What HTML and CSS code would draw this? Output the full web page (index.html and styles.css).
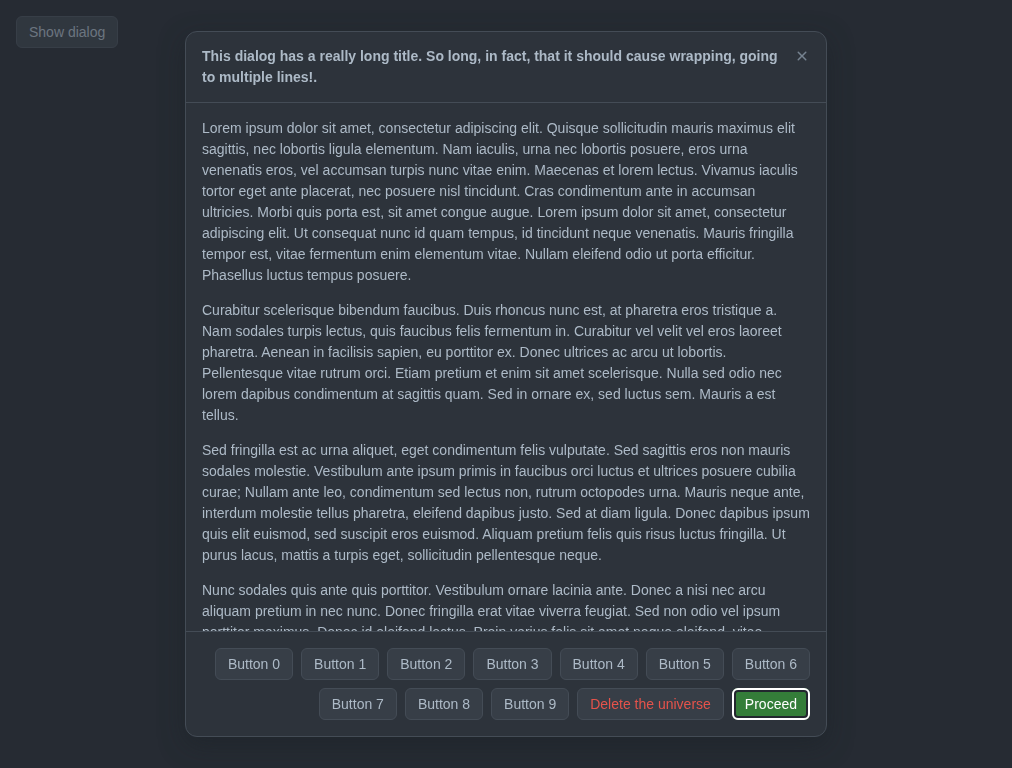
FILE: index.html
```html
<!DOCTYPE html>
<html lang="en">
<head>
<meta charset="utf-8">
<title>Dialog</title>
<link rel="stylesheet" href="styles.css">
</head>
<body>
<div class="page">
  <button class="btn btn-show">Show dialog</button>
</div>
<div class="backdrop">
  <div class="dialog" role="dialog">
    <div class="dialog-header">
      <h1 class="dialog-title">This dialog has a really long title. So long, in fact, that it should cause wrapping, going to multiple lines!.</h1>
      <button class="close" aria-label="Close">
        <svg width="16" height="16" viewBox="0 0 16 16"><path d="M3.72 3.72a.75.75 0 0 1 1.06 0L8 6.94l3.22-3.22a.749.749 0 0 1 1.275.326.749.749 0 0 1-.215.734L9.06 8l3.22 3.22a.749.749 0 0 1-.326 1.275.749.749 0 0 1-.734-.215L8 9.06l-3.220 3.22a.751.751 0 0 1-1.042-.018.751.751 0 0 1-.018-1.042L6.94 8 3.72 4.78a.75.75 0 0 1 0-1.06Z" fill="currentColor"/></svg>
      </button>
    </div>
    <div class="dialog-body">
      <p>Lorem ipsum dolor sit amet, consectetur adipiscing elit. Quisque sollicitudin mauris maximus elit sagittis, nec lobortis ligula elementum. Nam iaculis, urna nec lobortis posuere, eros urna venenatis eros, vel accumsan turpis nunc vitae enim. Maecenas et lorem lectus. Vivamus iaculis tortor eget ante placerat, nec posuere nisl tincidunt. Cras condimentum ante in accumsan ultricies. Morbi quis porta est, sit amet congue augue. Lorem ipsum dolor sit amet, consectetur adipiscing elit. Ut consequat nunc id quam tempus, id tincidunt neque venenatis. Mauris fringilla tempor est, vitae fermentum enim elementum vitae. Nullam eleifend odio ut porta efficitur. Phasellus luctus tempus posuere.</p>
      <p>Curabitur scelerisque bibendum faucibus. Duis rhoncus nunc est, at pharetra eros tristique a. Nam sodales turpis lectus, quis faucibus felis fermentum in. Curabitur vel velit vel eros laoreet pharetra. Aenean in facilisis sapien, eu porttitor ex. Donec ultrices ac arcu ut lobortis. Pellentesque vitae rutrum orci. Etiam pretium et enim sit amet scelerisque. Nulla sed odio nec lorem dapibus condimentum at sagittis quam. Sed in ornare ex, sed luctus sem. Mauris a est tellus.</p>
      <p>Sed fringilla est ac urna aliquet, eget condimentum felis vulputate. Sed sagittis eros non mauris sodales molestie. Vestibulum ante ipsum primis in faucibus orci luctus et ultrices posuere cubilia curae; Nullam ante leo, condimentum sed lectus non, rutrum octopodes urna. Mauris neque ante, interdum molestie tellus pharetra, eleifend dapibus justo. Sed at diam ligula. Donec dapibus ipsum quis elit euismod, sed suscipit eros euismod. Aliquam pretium felis quis risus luctus fringilla. Ut purus lacus, mattis a turpis eget, sollicitudin pellentesque neque.</p>
      <p>Nunc sodales quis ante quis porttitor. Vestibulum ornare lacinia ante. Donec a nisi nec arcu aliquam pretium in nec nunc. Donec fringilla erat vitae viverra feugiat. Sed non odio vel ipsum porttitor maximus. Donec id eleifend lectus. Proin varius felis sit amet neque eleifend, vitae porttitor lectus commodo. Sed consectetur nunc a lorem pretium, in tincidunt tortor efficitur.</p>
    </div>
    <div class="dialog-footer">
      <button class="btn">Button 0</button>
      <button class="btn">Button 1</button>
      <button class="btn">Button 2</button>
      <button class="btn">Button 3</button>
      <button class="btn">Button 4</button>
      <button class="btn">Button 5</button>
      <button class="btn">Button 6</button>
      <button class="btn">Button 7</button>
      <button class="btn">Button 8</button>
      <button class="btn">Button 9</button>
      <button class="btn btn-danger">Delete the universe</button>
      <button class="btn btn-primary">Proceed</button>
    </div>
  </div>
</div>
</body>
</html>
```
FILE: styles.css
```css
* { box-sizing: border-box; }
html, body { margin: 0; height: 100%; }
body {
  background: #22272e;
  font-family: "Liberation Sans", Arial, sans-serif;
  font-size: 14px;
  color: #adbac7;
}
.page { padding: 16px; }
.btn {
  height: 32px;
  padding: 0 12px;
  font-family: inherit;
  font-size: 14px;
  line-height: 20px;
  color: #adbac7;
  background: #373e47;
  border: 1px solid #444c56;
  border-radius: 6px;
  cursor: pointer;
  white-space: nowrap;
}
.backdrop {
  position: fixed;
  inset: 0;
  background: rgba(42, 47, 56, 0.5);
  display: flex;
  align-items: center;
  justify-content: center;
}
.dialog {
  width: 642px;
  height: 706px;
  display: flex;
  flex-direction: column;
  background: #2d333b;
  border: 1px solid #444c56;
  border-radius: 12px;
  box-shadow: 0 8px 24px rgba(28, 33, 40, 0.5);
  overflow: hidden;
}
.dialog-header {
  display: flex;
  align-items: flex-start;
  padding: 8px;
  border-bottom: 1px solid #444c56;
  flex-shrink: 0;
}
.dialog-title {
  flex: 1;
  margin: 0;
  padding: 6px 8px;
  font-size: 14px;
  line-height: 21px;
  font-weight: 700;
  color: #adbac7;
}
.close {
  width: 32px;
  height: 32px;
  flex-shrink: 0;
  display: flex;
  align-items: center;
  justify-content: center;
  padding: 0;
  border: 0;
  background: transparent;
  color: #768390;
  border-radius: 6px;
}
.dialog-body {
  flex: 1;
  overflow: hidden;
  padding: 15px 16px 16px;
  line-height: 21px;
}
.dialog-body p { margin: 0 0 14px; }
.dialog-footer {
  flex-shrink: 0;
  display: flex;
  flex-wrap: wrap;
  justify-content: flex-end;
  gap: 8px;
  padding: 16px;
  border-top: 1px solid #444c56;
}
.btn-danger { color: #e5534b; }
.btn-primary {
  color: #ffffff;
  background: #347d39;
  border-color: rgba(205, 217, 229, 0.1);
  outline: 2px solid #ffffff;
  outline-offset: -2px;
  box-shadow: inset 0 0 0 3px #22272e;
}
```
